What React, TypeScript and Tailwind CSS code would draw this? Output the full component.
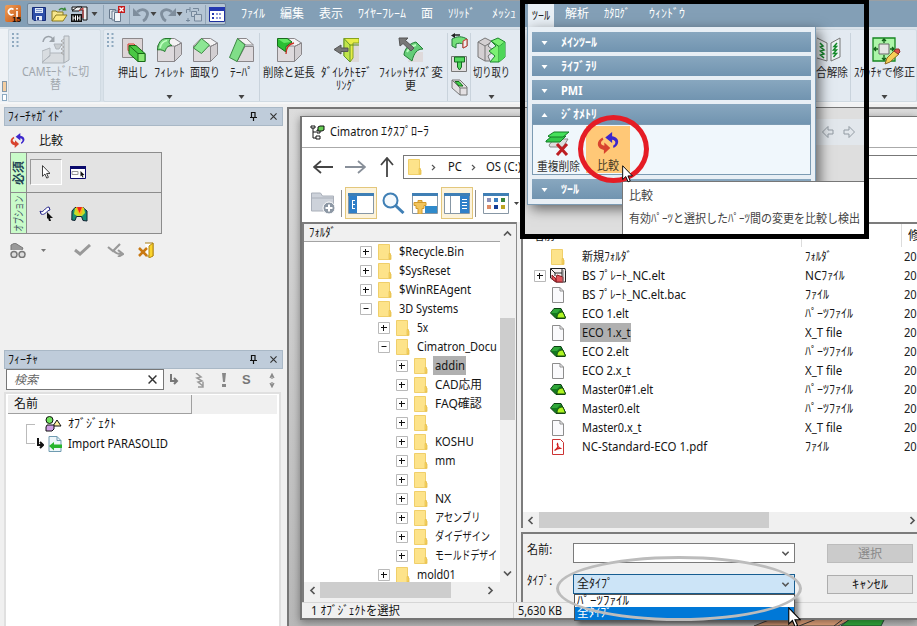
import React, { useLayoutEffect, useRef } from "react";

/* Label squeezed or stretched horizontally to the width of its box */
function Fit({ children, className = "" }: { children: React.ReactNode; className?: string }) {
  const outer = useRef<HTMLSpanElement>(null);
  const inner = useRef<HTMLSpanElement>(null);
  useLayoutEffect(() => {
    if (!outer.current || !inner.current) return;
    const k = outer.current.clientWidth / inner.current.offsetWidth;
    inner.current.style.transform = `scaleX(${k})`;
  }, []);
  return (
    <span ref={outer} className={`block shrink-0 text-left whitespace-nowrap ${className}`}>
      <span ref={inner} className="inline-block origin-left">{children}</span>
    </span>
  );
}

type IconProps = { w: number; h: number; className?: string; children: React.ReactNode };
const Icon = ({ w, h, className = "", children }: IconProps) => (
  <svg width={w} height={h} viewBox={`0 0 ${w} ${h}`} className={`block shrink-0 ${className}`} fill="none">
    {children}
  </svg>
);

const Caret = ({ className = "text-[#444]" }: { className?: string }) => (
  <Icon w={7} h={4} className={className}><path d="M0.5 0h6L3.500 4z" fill="currentColor" /></Icon>
);

/* ---------- quick access icons ---------- */
const AppIcon = () => (
  <Icon w={18} h={18}>
    <defs><linearGradient id="app" x2="1" y2="1"><stop stopColor="#f0a05a" /><stop offset="1" stopColor="#c4500c" /></linearGradient></defs>
    <rect width="16" height="17" rx="2" fill="url(#app)" />
    <path d="M8.500 4.500A3 3 0 1 0 8.500 9" stroke="#fff" strokeWidth="1.600" /><path d="M12 6v6M12 3v1.500" stroke="#fff" strokeWidth="1.600" />
    <text x="7" y="17" fontSize="8" fontWeight="700" fill="#111" fontFamily="Liberation Sans">15</text>
  </Icon>
);
const Save = () => (
  <Icon w={14} h={14}><path d="M.5.5h13v13H2L.5 12z" fill="#2d4fa8" stroke="#162c78" /><path d="M3 1h8v5H3z" fill="#dfe9f8" /><path d="M4 2.500h6M4 4.500h6" stroke="#7f97cc" /><path d="M4 9h6v4.500H4z" fill="#e8eef8" /><path d="M5 10h2v3H5z" fill="#26408f" /></Icon>
);
const Open = () => (
  <Icon w={17} h={15}><path d="M1 14V4h4l1 1h6v3" fill="#f6e58c" stroke="#8a7a20" /><path d="M1 14l4-6h11l-4 6z" fill="#fbe77b" stroke="#8a7a20" /><path d="M8 3c2-2 4-2 5 0" stroke="#3a8a3a" strokeWidth="1.500" /><path d="M11 3.500h4.500L14 0z" fill="#3a8a3a" /></Icon>
);
const Hh = () => (
  <Icon w={17} h={16}><path d="M1 1h15v13h-4V4H1z" fill="#eee" stroke="#111" /><path d="M1 5l5-4h5L8 5z" fill="#eee" stroke="#111" /><path d="M8 5l4-3v10" stroke="#c33" /><path d="M0 8h11v8H0z" fill="#111" /><path d="M2 9.500v5M4.500 9.500v5M2 12h2.500M6.500 9.500v5M9 9.500v5M6.500 12H9" stroke="#fff" /></Icon>
);
const CloseAll = () => (
  <Icon w={17} h={16}><path d="M.5 3.500h6v9h-6z" fill="#dfe5ec" stroke="#66788c" /><path d="M3 5h6v9H3z" fill="#e8edf2" stroke="#66788c" /><path d="M5.500 6.500h6v9h-6z" fill="#f3f6f9" stroke="#66788c" /><path d="M9 0h7v7H9z" fill="#c61a1a" /><path d="M10.500 1.500l4 4m0-4l-4 4" stroke="#fff" strokeWidth="1.400" /></Icon>
);
const Undo = ({ flip = false }: { flip?: boolean }) => (
  <Icon w={17} h={15} className={flip ? "-scale-x-100" : ""}><path d="M4 5c6-5 12-1 10 4-.6 2-2 4-4 5" stroke="#7f8e9d" strokeWidth="2.800" /><path d="M0 1v8h8z" fill="#7f8e9d" /></Icon>
);
const Swap = () => (
  <Icon w={17} h={16}><path d="M5 3.500H1.500V7M5 1v5M1 14.500h4M3 12v4" stroke="#75879a" /><path d="M6.500 5.500h5v5h-5z" fill="#c3ced9" stroke="#75879a" /><path d="M9.500 8.500h7v6.500h-7z" fill="#c3ced9" stroke="#75879a" /><path d="M8 2.500h5.500V5" stroke="#75879a" /></Icon>
);
const ListWin = () => (
  <Icon w={16} h={15}><path d="M.5.500h15v14H.5z" fill="#fff" stroke="#1d2f9c" /><path d="M0 0h16v4H0z" fill="#2438b0" /><path d="M3 6h2v2H3zM3 10h2v2H3z" fill="#2438b0" /><path d="M7 7h6M7 11h6" stroke="#2438b0" strokeDasharray="2 1" /></Icon>
);

/* ---------- ribbon icons ---------- */
const Cube = ({ children }: { children?: React.ReactNode }) => (
  <Icon w={27} h={26}>
    <path d="M1 8.500L9 1h9l8 7.500-7 3H1z" fill="#f4f2f3" />
    <path d="M1.500 9H18.500v15.500h-17z" fill="#dedadd" stroke="#8a878a" />
    <path d="M18.500 9.500L25.500 6v11.500l-7 7z" fill="#d2ced1" stroke="#8a878a" />
    <path d="M1.500 9L9 1.500h9.500l7 4.500-7 3.500" stroke="#8a878a" />
    {children}
  </Icon>
);
const Extrude = () => (
  <Icon w={25} h={26}><path d="M1.500 1.500h20v19h-20z" fill="#ddd5d7" stroke="#8c888a" /><path d="M7 7h6l3 3h-5v5l-4-1.500z" fill="#e9c6c4" stroke="#d63a2a" /><path d="M8 8.500h7l9 8v8h-7l-9-8z" fill="#49c843" stroke="#176b16" /><path d="M17 16.500h7v8h-7zM8 8.500l9 8" fill="#8ae874" stroke="#176b16" /></Icon>
);
const Fillet = () => <Cube><path d="M1.500 13C2 6 5 1.500 10 1.500h5l-1 1c-2 3 0 5 2 6-5 0-6 3-7 6-3-2-6-2-7.500-1.500z" fill="#7ddd84" stroke="#23772c" /><path d="M4 11c1-5 4-7 7-7.500" stroke="#c3ffc3" strokeWidth="1.500" /></Cube>;
const Chamfer = () => <Cube><path d="M1.500 11L9.500 1.500l8 6.500-8 8.500z" fill="#8de794" stroke="#3b8842" /></Cube>;
const Taper = () => (
  <Icon w={27} h={26}><path d="M9 1.500h9.500L25.500 8H18z" fill="#f4f2f3" stroke="#8a878a" /><path d="M17 9.500h8.500v15H9z" fill="#dedadd" stroke="#8a878a" /><path d="M1.500 20.500L9.500 1.500l7.500 6.500-8 16.500z" fill="#80de88" stroke="#3b8842" /></Icon>
);
const DelExtend = () => <Cube><path d="M1.500 1.500h10L16 5l-6 4.500V15L1.500 9z" fill="#2bbf33" stroke="#176b1b" /><path d="M2 2h9l4 3-7 1z" fill="#64e765" /><path d="M18 6c-5 1-8 4-8 11" stroke="#c93224" strokeWidth="1.300" /></Cube>;
const Direct = () => (
  <Icon w={25} h={26}><path d="M16 6h9v19h-9z" fill="#ddd9da" /><path d="M10 1.500h15V6h-6v15l-3 4-6-6z" fill="#e7ed47" stroke="#86a41b" /><path d="M10 1.500l6 6.500v17l-6-6z" fill="#c1e54a" stroke="#5f9430" /><path d="M16 8h9" stroke="#5f8d1b" /><path d="M0 12.500L7 8v3h7v3.500H7V17z" fill="#777" stroke="#555" /></Icon>
);
const FilletSize = () => (
  <Icon w={26} h={26}><path d="M13 15h12v10H10z" fill="#dfdadb" /><path d="M6 18c0-5 5-12 12-13l7 7c-6 0-9 4-11 12z" fill="#65cc78" stroke="#218033" /><path d="M9 15c2-4 5-6 9-7" stroke="#baffbe" strokeWidth="2" /><path d="M1 1h9L7.500 3.500 16 11l-3 3-8-7.500L2 9z" fill="#777" stroke="#555" /></Icon>
);
const Mini1 = () => <Icon w={17} h={16}><path d="M1 6c5-3 10-3 15 0v7l-4 2v-4c-2-1-5-1-7 0v4l-4-2z" fill="#73df79" stroke="#23773a" /><path d="M12 8l4-2v7l-4 2z" fill="#eee" stroke="#c33" /><path d="M3 2h6" stroke="#222" strokeWidth="1.500" /><path d="M0 2.500L4 0v5z" fill="#222" /></Icon>;
const Mini2 = () => <Icon w={17} h={16}><path d="M.5.500h15v15H.5z" fill="#e0dee0" stroke="#777" /><path d="M3.500 1h10v5h-3v5l-2 3-2-3V6h-3z" fill="#55d960" stroke="#126d20" /><path d="M6 6h5" stroke="#126d20" /></Icon>;
const Mini3 = () => <Icon w={17} h={17}><path d="M1 1h8l7 7v8H9L1 9z" fill="#e4e1e3" stroke="#777" /><path d="M9 9h7M9 9v7M1 1l8 8" stroke="#777" /><path d="M4 2.500h4l4 4.500H8z" fill="#45d14a" stroke="#166b1b" /></Icon>;
const Trim = () => (
  <Icon w={29} h={26}><path d="M1 5L8 1l6 3-3 5 6 5-6 5 2 5H8l-7-4z" fill="#d4d0d2" stroke="#777" /><path d="M1 5l7 4v15M8 9l5-3" stroke="#777" /><path d="M14 4l7-3 7 4v15l-6 5h-9l5-6-6-5 7-5z" fill="#7bf073" stroke="#1b852a" /><path d="M14 4l8 5.500V25M22 9.500L28 5" stroke="#1b852a" /><path d="M22 9.500L28 5v15l-6 5z" fill="#4fd659" /></Icon>
);
const CamIcon = () => (
  <Icon w={28} h={29}><path d="M0 16l8-3v8L0 27zM8 18h14v10H0l8-8" fill="#d8dce0" stroke="#b0b6bc" /><path d="M12 9h8l-3 5h-3z" fill="#c9ced2" stroke="#b0b6bc" /><path d="M22 1h5v24l-5 3V2z" fill="#d9dde0" stroke="#aab0b6" /><path d="M22 4l-3 2 3 2-3 2 3 2-3 2 3 2-3 2 3 2" stroke="#aaa" /><path d="M1 7c1-6 7-7 10-3" stroke="#9ba2a9" strokeWidth="1.500" /><path d="M12.500 1v6H7z" fill="#9ba2a9" /></Icon>
);
const Unjoin = () => (
  <Icon w={25} h={26}><path d="M1 1l10 5v18l-10-3M24 1l-9 5v18l9-4z" fill="#eef3f5" stroke="#777" /><path d="M4 6l3 3-2.500 1 3.500 3-3.500 1 3.500 3-3.500 1 3.500 3M21 6l-3 3.500h2.500L17.500 13h3l-3 3.500h3l-3 3.500" stroke="#168b2c" strokeWidth="1.500" /></Icon>
);
const Sketcher = () => (
  <Icon w={29} h={28}><path d="M1 1h22v23H1z" fill="#adf6a9" stroke="#168620" strokeWidth="1.300" /><path d="M7 7h10v10H7z" fill="#e5e5e5" stroke="#666" /><path d="M12 6V2M12 18v5M6 12H2M18 12h4M10 4l2-2 2 2M10 21l2 2 2-2M4 10l-2 2 2 2M20 10l2 2-2 2" stroke="#126018" strokeWidth="1.300" /><path d="M13 27l2-6 8-8 4 4-9 8z" fill="#f7cf56" stroke="#8d6822" /><path d="M22 14l2-2h3l1 3-2 2z" fill="#dc504a" stroke="#8d322a" /></Icon>
);
const Dots = () => (
  <Icon w={7} h={15}>{[0, 4, 8, 12].map((y) => <path key={y} d={`M0 ${y}h2v2H0zM4.500 ${y}h2v2h-2z`} fill="#8fa9bf" />)}</Icon>
);

const Tool = ({ icon, a, aw, b, bw = "", w, arrow = false }: { icon: React.ReactNode; a: string; aw: string; b?: string; bw?: string; w: string; arrow?: boolean }) => (
  <div className={`flex shrink-0 flex-col items-center pt-[7px] ${w}`}>
    <div className="flex h-[29px] shrink-0 items-start">{icon}</div>
    <Fit className={`h-[13px] leading-[13px] ${aw}`}>{a}</Fit>
    {b ? <Fit className={`h-[13px] leading-[13px] ${bw}`}>{b}</Fit> : <div className="h-[13px] shrink-0" />}
    {arrow && <Caret className="mt-[3px] text-[#444]" />}
  </div>
);
const Sep = () => <div className="mt-[3px] h-[68px] w-px shrink-0 bg-[#c9d3dc]" />;

/* ---------- shared glyphs ---------- */
const CompareIcon = ({ s = 24 }: { s?: number }) => (
  <svg width={s} height={s} viewBox="0 0 24 24" className="block shrink-0">
    <path d="M6 6C-1.500 10-.5 18 7.500 19.500V24l7-6.500-6.500-6V15C3.500 14 3 11 7 8.500z" fill="#d8432e" />
    <path d="M18 17.500c7.500-4 6.500-12-1.500-13V0L9 6l7.500 6V8.500c4 .5 5 4 1 6.500z" fill="#3d27cc" />
  </svg>
);
const Arrow = ({ size = 19 }: { size?: number }) => (
  <svg width={(size * 12) / 19} height={size} viewBox="0 0 12 19" className="block"><path d="M.7.8v14.500L4 12.200l2.400 5.600 2.300-1-2.400-5.300H11z" fill="#fff" stroke="#000" /></svg>
);
const Pin = () => <Icon w={7} h={9}><path d="M1.500 0v5M5 0v5M1.500.5H5M0 5.500h7M3.500 6v3" stroke="#111" strokeWidth="1.200" /></Icon>;
const X = ({ s = 7 }: { s?: number }) => <svg width={s} height={s} viewBox="0 0 8 8"><path d="M.5.500l7 7m0-7l-7 7" stroke="#333" strokeWidth="1.300" /></svg>;
const Folder = () => <Icon w={14} h={16}><path d="M.5.5h11v9.500l1.500 1V15.500H.5z" fill="#fde38a" stroke="#f0cf6a" /><path d="M11 9.500h1.500V15H11z" fill="#f9d660" stroke="#e2bb48" strokeWidth=".6" /></Icon>;
const Expand = ({ open = false }: { open?: boolean }) => (
  <Icon w={12} h={12}><path d="M.5.500h11v11H.5z" fill="#fff" stroke="#b9b9b9" /><path d={open ? "M3.500 5.500h5" : "M3 5.500h6M5.500 3v6"} stroke="#111" strokeWidth="1" /></Icon>
);
const Doc = () => <Icon w={12} h={16}><path d="M.5.500h7.500l3.500 3.500v11.500H.5z" fill="#fafafc" stroke="#8d8d8d" /><path d="M8 .5V4h3.500" stroke="#8d8d8d" /></Icon>;
const Part = () => <Icon w={16} h={11}><path d="M.5 5L4 .5h7l4.500 9L15 10.500H6z" fill="#137a1f" stroke="#0b4112" /><path d="M4 1h7l-4 4H1z" fill="#30a73a" /><path d="M7 10c0-4 2-6 6-6l2.500 6z" fill="#aef522" stroke="#164c11" /></Icon>;
const NcPart = () => <Icon w={17} h={15}><path d="M.5.500H15l.5 2V14H6L.5 10z" fill="#f7f2f2" stroke="#222" /><path d="M1 1l4 4h7V1M5 5v3M12 5v4" stroke="#222" /><path d="M2 7l4 4v3l-4-3zM7 7l6 2v5H6v-4z" fill="#e0545a" stroke="#8b1d22" /><path d="M13 2v12" stroke="#777" /></Icon>;
const Pdf = () => <Icon w={12} h={16}><path d="M.5.500h8l3 3v12H.5z" fill="#fff" stroke="#c33" /><path d="M2.500 11.500c3-2 4-5 3-7-1 1 1 5 4 5-2-.5-5 .5-7 2z" stroke="#d22020" strokeWidth="1.200" /></Icon>;
const Chevron = ({ d, className = "" }: { d: string; className?: string }) => <Icon w={9} h={9} className={className}><path d={d} stroke="#555" strokeWidth="1.700" /></Icon>;
const LEFT = "M6.500 1L3 4.500 6.500 8";
const RIGHT = "M2.500 1L6 4.500 2.500 8";
const UP = "M1 6.500L4.500 3 8 6.500";
const DOWN = "M1 2.500L4.500 6 8 2.500";

/* ---------- main frame ---------- */
const MenuBar = () => (
  <div className="flex h-[27px] shrink-0 items-center border-t border-[#9a9fa3] bg-[#839fb6] text-[12px] text-white">
    <div className="flex w-[27px] justify-center"><AppIcon /></div>
    <div className="flex h-[22px] w-[199px] shrink-0 items-center rounded-[2px] border border-[#71869a] bg-[#b5c5d4] pl-1">
      <Save /><span className="w-[6px]" /><Open /><span className="w-[4px]" /><Hh /><span className="w-[4px]" /><Caret />
      <span className="mr-[5px] ml-[5px] h-[19px] w-px bg-[#91a5b7]" /><CloseAll />
      <span className="mx-[3px] h-[19px] w-px bg-[#91a5b7]" /><Undo /><Caret /><span className="w-[3px]" /><Undo flip /><Caret /><span className="w-[3px]" /><Swap />
      <span className="mx-[3px] h-[19px] w-px bg-[#91a5b7]" /><ListWin />
    </div>
    <Fit className="ml-[15px] w-[24px]">ﾌｧｲﾙ</Fit>
    <Fit className="ml-[15px] w-[24px]">編集</Fit>
    <Fit className="ml-[15px] w-[24px]">表示</Fit>
    <Fit className="ml-[15px] w-[48px]">ﾜｲﾔｰﾌﾚｰﾑ</Fit>
    <Fit className="ml-[15px] w-[12px]">面</Fit>
    <Fit className="ml-[15px] w-[27px]">ｿﾘｯﾄﾞ</Fit>
    <Fit className="ml-[17px] w-[24px]">ﾒｯｼｭ</Fit>
    <div className="ml-[12px] flex h-[23px] w-[26px] items-center self-end bg-[#e8eff5] pl-[4px] text-[#222]"><Fit className="w-[18px]">ﾂｰﾙ</Fit></div>
    <Fit className="ml-[11px] w-[24px]">解析</Fit>
    <Fit className="ml-[15px] w-[26px]">ｶﾀﾛｸﾞ</Fit>
    <Fit className="ml-[19px] w-[36px]">ｳｨﾝﾄﾞｳ</Fit>
  </div>
);

const Ribbon = () => (
  <div className="flex h-[77px] shrink-0 border-b-2 border-[#f5f6f7] bg-[#d9e2ea] pt-[2px] text-[12px] text-[#262626]">
    <div className="flex w-[8px] shrink-0 flex-col justify-end gap-[2px] bg-[#edf1f5] pb-[1px] pl-[2px]">
      <div className="h-[11px] w-[5px] shrink-0 border border-[#8498a8] bg-[#f3cda0]" /><div className="h-[7px] w-[5px] shrink-0 border border-[#8ba9c1] bg-white" />
    </div>
    <div className="mr-[2px] flex w-[93px] shrink-0 rounded-[2px] border border-[#d0dae2] bg-[#e3eaf1] text-[#a0a6ac]">
      <div className="pt-[3px] pl-[3px]"><Dots /></div>
      <div className="flex flex-col items-center pt-[5px] pl-[3px]">
        <CamIcon /><Fit className="mt-[1px] h-[13px] w-[67px] leading-[13px]">CAMﾓｰﾄﾞに切</Fit><Fit className="h-[13px] w-[11px] leading-[13px]">替</Fit>
      </div>
    </div>
    <div className="flex min-w-0 flex-1 rounded-[2px] border border-[#d0dae2] bg-[#e3eaf1]">
      <div className="w-[11px] shrink-0 pt-[3px] pl-[3px]"><Dots /></div>
      <Tool w="w-[36px]" icon={<Extrude />} a="押出し" aw="w-[30px]" />
      <Tool w="w-[36px]" icon={<Fillet />} a="ﾌｨﾚｯﾄ" aw="w-[31px]" arrow />
      <Tool w="w-[36px]" icon={<Chamfer />} a="面取り" aw="w-[30px]" />
      <Tool w="w-[36px]" icon={<Taper />} a="ﾃｰﾊﾟ" aw="w-[23px]" arrow />
      <Sep />
      <Tool w="w-[58px]" icon={<DelExtend />} a="削除と延長" aw="w-[52px]" />
      <Tool w="w-[56px]" icon={<Direct />} a="ﾀﾞｲﾚｸﾄﾓﾃﾞ" aw="w-[51px]" b="ﾘﾝｸﾞ" bw="w-[21px]" />
      <Tool w="w-[73px]" icon={<FilletSize />} a="ﾌｨﾚｯﾄｻｲｽﾞ変" aw="w-[64px]" b="更" bw="w-[11px]" />
      <Sep />
      <div className="flex w-[22px] shrink-0 flex-col items-center gap-[7px] pt-[3px]"><Mini1 /><Mini2 /><Mini3 /></div>
      <Sep />
      <Tool w="w-[41px]" icon={<Trim />} a="切り取り" aw="w-[37px]" arrow />
      <div className="w-[302px] shrink-0" />
      <Tool w="w-[36px]" icon={<div className="-ml-[8px]"><Unjoin /></div>} a="合解除" aw="w-[32px]" />
      <Sep />
      <Tool w="w-[67px]" icon={<div className="ml-[4px]"><Sketcher /></div>} a="ｽｹｯﾁｬで修正" aw="w-[61px]" arrow />
    </div>
  </div>
);

const PaneHeader = ({ text, w }: { text: string; w: string }) => (
  <div className="flex h-[19px] shrink-0 items-center border border-[#a9b8c6] bg-[#bfccda] pl-[3px] text-[12px] text-[#111]">
    <Fit className={w}>{text}</Fit><div className="flex-1" /><Pin /><span className="w-[13px]" /><X /><span className="w-[5px]" />
  </div>
);

const FeatureGuide = () => (
  <div className="h-[243px] shrink-0">
    <PaneHeader text="ﾌｨｰﾁｬｶﾞｲﾄﾞ" w="w-[57px]" />
    <div className="flex h-[26px] items-center pt-[3px] pl-[6px] text-[12px] text-[#111]"><CompareIcon s={15} /><Fit className="ml-[14px] w-[24px]">比較</Fit></div>
    <div className="ml-[6px] h-[82px] w-[152px] border border-[#8c8c8c] bg-[#e3e3e3]">
      <div className="flex h-[40px] border-b border-[#8c8c8c]">
        <div className="flex w-[16px] shrink-0 items-center justify-center border-r border-[#8c8c8c] bg-[#c9fbc9]"><span className="-rotate-90 text-[12px] leading-none font-bold whitespace-nowrap text-[#245]">必須</span></div>
        <div className="mt-[6px] ml-[3px] flex h-[26px] w-[32px] items-center justify-center border border-t-[#999] border-r-white border-b-white border-l-[#999] bg-[#e9e9e9]"><Arrow size={14} /></div>
        <Icon w={16} h={13} className="mt-[13px] ml-[8px]"><path d="M.5.500h15v12H.5z" fill="#fff" stroke="#09096b" /><path d="M0 0h16v3H0z" fill="#09096b" /><path d="M2 5.500h6v3H2z" stroke="#999" /><path d="M10.500 5l4 4-2 .2 1 2-1 .3-1-2-1 1z" fill="#111" /></Icon>
      </div>
      <div className="flex h-[40px]">
        <div className="flex w-[16px] shrink-0 items-center justify-center border-r border-[#8c8c8c] bg-[#c9fbc9]"><span className="-rotate-90 scale-x-65 text-[11px] leading-none whitespace-nowrap text-[#456]">オプション</span></div>
        <Icon w={15} h={15} className="mt-[13px] ml-[12px]"><path d="M1 5c3 3 5-4 9-4l1 3C8 4 6 10 2 8z" fill="#fff" stroke="#22228a" /><path d="M8 6l6 6H11l1 3h-2l-1-3-1 1z" fill="#111" /></Icon>
        <Icon w={17} h={16} className="mt-[13px] ml-[17px]"><path d="M1 5l3-3.500h8l4 3.500v10l-4-.500-1.500-4h-5L4 14.500.8 14z" fill="#178f74" stroke="#123" /><path d="M4 2h9l1 5-3 3H6L3 8z" fill="#c6de28" /><path d="M5 1h7l-1 6-2 2-2-2z" fill="#ffb01c" /><path d="M6 1h5L8.500 7z" fill="#e22" /></Icon>
      </div>
    </div>
    <div className="flex h-[32px] items-center pl-[6px]">
      <Icon w={16} h={15}><path d="M1 7V2l4-2 8 5-1 2" fill="#999" stroke="#777" /><circle cx="4" cy="11.500" r="3" stroke="#777" fill="#ddd" strokeWidth="1.500" /><circle cx="12" cy="11.500" r="3" stroke="#777" fill="#ddd" strokeWidth="1.500" /></Icon>
      <Icon w={5} h={3} className="ml-[15px]"><path d="M0 0h5L2.500 3z" fill="#777" /></Icon>
      <Icon w={17} h={12} className="ml-[28px]"><path d="M1 6l5 4 10-9" stroke="#999" strokeWidth="3" /></Icon>
      <Icon w={17} h={14} className="ml-[16px]"><path d="M1 4l5 4 7-7M7 8c2 3 4 3 7 3M11 7l5 4-5 3" stroke="#999" strokeWidth="2.200" /></Icon>
      <Icon w={17} h={16} className="ml-[14px]"><path d="M7 1h8v13H9" fill="#fff" stroke="#a87d12" /><path d="M11 4l4-3v13l-4 2z" fill="#fbd42d" stroke="#b58910" /><path d="M1 6l8 8M9 6l-8 8" stroke="#c97912" strokeWidth="2.500" /></Icon>
    </div>
  </div>
);

const FeatureTree = () => (
  <div className="flex flex-1 flex-col">
    <PaneHeader text="ﾌｨｰﾁｬ" w="w-[30px]" />
    <div className="flex h-[23px] shrink-0 items-start pl-[2px] text-[#888]">
      <div className="flex h-[21px] w-[158px] items-center border border-[#777] bg-white pr-[6px] pl-[7px]"><Fit className="w-[24px] text-[12px] leading-none text-[#666] italic">検索</Fit><div className="flex-1" /><X s={9} /></div>
      <Icon w={10} h={11} className="mt-[5px] ml-[5px]"><path d="M2 0v7h6M5 4l3 3-3 3" stroke="#777" strokeWidth="2" /></Icon>
      <Icon w={10} h={15} className="mt-[4px] ml-[16px]"><path d="M1 0l5 4-4 1 5 3-4 1 5 4M8 9v5H3" stroke="#999" strokeWidth="1.500" /></Icon>
      <Icon w={4} h={14} className="mt-[4px] ml-[17px]"><path d="M0 0h4L3 9H1zM0 11h4v3H0z" fill="#888" /></Icon>
      <span className="ml-[16px] font-['Liberation_Sans',sans-serif] text-[13px] leading-[21px] font-bold text-[#777]">S</span>
      <Icon w={6} h={15} className="mt-[4px] ml-[18px]"><path d="M1 5l2-4 2 4M3 1v5M1 10l2 4 2-4M3 9v5" stroke="#888" strokeWidth="1.200" /></Icon>
    </div>
    <div className="mr-[2px] flex-1 border-2 border-b-0 border-[#e0e0e0] bg-white px-[2px] pt-[1px] text-[12px] text-[#111]">
      <div className="flex h-[19px] bg-[#f0f0f0]"><div className="flex w-[184px] items-center border-r border-b border-[#a0a0a0] pl-[6px]"><Fit className="w-[24px]">名前</Fit></div></div>
      <div className="flex h-[20px] items-center pl-[18px]"><div className="h-[10px] w-[9px] self-end border-t border-l border-[#bbb]" />
        <Icon w={17} h={16} className="ml-[10px]"><circle cx="4.500" cy="4" r="3.500" fill="#71e35d" stroke="#111" /><path d="M12 4l4 6H8z" fill="#fff0a2" stroke="#111" /><path d="M2 9h7v4l-2 2H1v-4z" fill="#cf9ee5" stroke="#111" /></Icon>
        <Fit className="ml-[6px] w-[48px]">ｵﾌﾞｼﾞｪｸﾄ</Fit></div>
      <div className="flex h-[19px] items-center pl-[18px]"><div className="h-[10px] w-[9px] self-start border-b border-l border-[#bbb]" />
        <Icon w={8} h={11} className="ml-[1px]"><path d="M2 0v7h5M4 4l3 3-3 3" stroke="#111" strokeWidth="2" /></Icon>
        <Icon w={15} h={16} className="ml-[4px]"><path d="M1 .5h8l4 4v11H1z" fill="#eef6fa" stroke="#6f9bb1" /><path d="M9 .5v4h4" stroke="#6f9bb1" /><path d="M1 10l5-4v2.500h8v3.500H6v2.500z" fill="#28b52e" /></Icon>
        <Fit className="ml-[5px] w-[100px]">Import PARASOLID</Fit></div>
    </div>
  </div>
);

/* ---------- explorer dialog ---------- */
const folders: { pad: string; name: string; w: string; open?: boolean; sel?: boolean }[] = [
  { pad: "pl-[57px]", name: "$Recycle.Bin", w: "w-[65px]" },
  { pad: "pl-[57px]", name: "$SysReset", w: "w-[51px]" },
  { pad: "pl-[57px]", name: "$WinREAgent", w: "w-[72px]" },
  { pad: "pl-[57px]", name: "3D Systems", w: "w-[59px]", open: true },
  { pad: "pl-[75px]", name: "5x", w: "w-[11px]" },
  { pad: "pl-[75px]", name: "Cimatron_Docu", w: "w-[80px]", open: true },
  { pad: "pl-[93px]", name: "addin", w: "w-[30px]", sel: true },
  { pad: "pl-[93px]", name: "CAD応用", w: "w-[47px]" },
  { pad: "pl-[93px]", name: "FAQ確認", w: "w-[47px]" },
  { pad: "pl-[93px]", name: "", w: "" },
  { pad: "pl-[93px]", name: "KOSHU", w: "w-[39px]" },
  { pad: "pl-[93px]", name: "mm", w: "w-[20px]" },
  { pad: "pl-[93px]", name: "", w: "" },
  { pad: "pl-[93px]", name: "NX", w: "w-[16px]" },
  { pad: "pl-[93px]", name: "アセンブリ", w: "w-[45px]" },
  { pad: "pl-[93px]", name: "ダイデザイン", w: "w-[55px]" },
  { pad: "pl-[93px]", name: "モールドデザイ", w: "w-[62px]" },
  { pad: "pl-[75px]", name: "mold01", w: "w-[39px]" },
];

const files: { icon: React.ReactNode; name: string; w: string; type: string; tw: string; sel?: boolean; plus?: boolean }[] = [
  { icon: <Folder />, name: "新規ﾌｫﾙﾀﾞ", w: "w-[50px]", type: "ﾌｫﾙﾀﾞ", tw: "w-[27px]" },
  { icon: <NcPart />, name: "BS ﾌﾟﾚｰﾄ_NC.elt", w: "w-[83px]", type: "NCﾌｧｲﾙ", tw: "w-[40px]", plus: true },
  { icon: <Doc />, name: "BS ﾌﾟﾚｰﾄ_NC.elt.bac", w: "w-[104px]", type: "ﾌｧｲﾙ", tw: "w-[24px]" },
  { icon: <Part />, name: "ECO 1.elt", w: "w-[47px]", type: "ﾊﾟｰﾂﾌｧｲﾙ", tw: "w-[48px]" },
  { icon: <Doc />, name: "ECO 1.x_t", w: "w-[49px]", type: "X_T file", tw: "w-[37px]", sel: true },
  { icon: <Part />, name: "ECO 2.elt", w: "w-[47px]", type: "ﾊﾟｰﾂﾌｧｲﾙ", tw: "w-[48px]" },
  { icon: <Doc />, name: "ECO 2.x_t", w: "w-[49px]", type: "X_T file", tw: "w-[37px]" },
  { icon: <Part />, name: "Master0#1.elt", w: "w-[71px]", type: "ﾊﾟｰﾂﾌｧｲﾙ", tw: "w-[48px]" },
  { icon: <Part />, name: "Master0.elt", w: "w-[58px]", type: "ﾊﾟｰﾂﾌｧｲﾙ", tw: "w-[48px]" },
  { icon: <Doc />, name: "Master0.x_t", w: "w-[60px]", type: "X_T file", tw: "w-[37px]" },
  { icon: <Pdf />, name: "NC-Standard-ECO 1.pdf", w: "w-[125px]", type: "ﾌｧｲﾙ", tw: "w-[24px]" },
];

const Win = ({ children }: { children: React.ReactNode }) => (
  <Icon w={26} h={21}><path d="M.5.500h25v20H.5z" fill="#fff" stroke="#8797a5" /><path d="M0 0h26v3H0z" fill="#3f7fb5" />{children}</Icon>
);
const swatches = ["#8f91b8", "#3b7fc0", "#3a853d", "#df8b66", "#143d96", "#bda41f"];

const DialogToolbar = () => (
  <div className="flex h-[38px] shrink-0 items-center pl-[9px]">
    <Icon w={25} h={22}><path d="M.5 1h9l2 3h11v15H.5z" fill="#cdd2da" stroke="#aab0ba" /><path d="M.5 6h22" stroke="#aab0ba" /><circle cx="18" cy="16" r="6" fill="#8d98a5" stroke="#fff" /><path d="M14.500 16h7M18 12.500v7" stroke="#fff" strokeWidth="2" /></Icon>
    <div className="mr-[3px] ml-[5px] h-[27px] w-px bg-[#8e8e8e]" />
    <div className="flex h-[32px] w-[32px] items-center justify-center border border-[#e3c77c] bg-[#fcf3dc]"><Win><path d="M1 3h8v17H1z" fill="#2f7fc8" /><path d="M4.500 7v9M4 7.500h3M4 11.500h3M4 15.500h3" stroke="#fff" /></Win></div>
    <Icon w={23} h={22} className="ml-[5px]"><circle cx="8.500" cy="8.500" r="7" stroke="#3f7fb5" strokeWidth="2" fill="#f4f9fd" /><path d="M13.500 13.500l8 7.500" stroke="#3f7fb5" strokeWidth="3" /></Icon>
    <span className="w-[7px]" />
    <Win><path d="M13 13h12v7H13z" fill="#2f8acb" /><path d="M2 9.500h12v3h-2v3h-2V21H6v-5.500H4v-3H2zM6 7.500h4v2H6z" fill="#f1c45c" stroke="#d19a2c" /></Win>
    <div className="ml-[3px] flex h-[32px] w-[32px] items-center justify-center border border-[#e3c77c] bg-[#fcf3dc]"><Win><path d="M6.500 3v17" stroke="#8797a5" /><path d="M16 3h9v17h-9z" fill="#2f7fc8" /><path d="M18 6.500h5M18 9.500h5M18 12.500h5M18 15.500h5" stroke="#fff" /></Win></div>
    <div className="mr-[7px] ml-[2px] h-[27px] w-px bg-[#8e8e8e]" />
    <Win>{swatches.map((c, i) => <rect key={c} x={4 + (i % 3) * 7} y={5 + Math.floor(i / 3) * 7} width="4" height="4" fill={c} />)}</Win>
    <Icon w={5} h={3} className="ml-[5px]"><path d="M0 0h5L2.500 3z" fill="#444" /></Icon>
  </div>
);

const FolderPane = () => (
  <div className="flex w-[214px] shrink-0 flex-col border-t-2 border-l-2 border-[#7c7c7c] bg-[#f0f0f0]">
    <div className="flex h-[358px] shrink-0">
      <div className="w-[196px] shrink-0 overflow-hidden bg-white">
        <div className="flex h-[18px] items-center border-b border-[#a3a3a3] bg-[#f0f0f0] pl-[5px]"><Fit className="w-[27px]">ﾌｫﾙﾀﾞ</Fit></div>
        {folders.map((f, i) => (
          <div key={i} className={`-ml-px flex h-[19px] items-center ${f.pad}`}>
            <Expand open={f.open} /><span className="w-[6px] shrink-0" /><Folder />
            {f.name && <div className={`ml-[5px] flex h-[19px] items-center pr-px pl-[2px] ${f.sel ? "bg-[#b0b0b0]" : ""}`}><Fit className={f.w}>{f.name}</Fit></div>}
          </div>
        ))}
      </div>
      <div className="flex w-[15px] flex-col items-center"><Chevron d={UP} className="mt-[5px]" /><div className="mt-[80px] h-[102px] w-full shrink-0 bg-[#cdcdcd]" /><div className="flex-1" /><Chevron d={DOWN} className="mb-[4px]" /></div>
    </div>
    <div className="flex h-[16px] shrink-0 items-center pl-[4px]"><Chevron d={LEFT} /><div className="ml-[3px] h-full w-[131px] bg-[#cdcdcd]" /><Chevron d={RIGHT} className="ml-[35px]" /></div>
  </div>
);

const FilePane = () => (
  <div className="flex h-[306px] flex-col border-t-2 border-l-2 border-[#7c7c7c] bg-white">
    <div className="flex h-[23px] shrink-0 items-center"><Fit className="ml-[10px] w-[22px]">名前</Fit><div className="ml-[246px] h-full w-px bg-[#dcdcdc]" /><div className="ml-[99px] h-full w-px bg-[#dcdcdc]" /><span className="ml-[6px] w-[9px] shrink-0 overflow-hidden whitespace-nowrap">修正</span></div>
    <div className="flex-1">
      {files.map((f, i) => (
        <div key={i} className="flex h-[19px] items-center overflow-hidden">
          <div className="w-[23px] shrink-0 pl-[11px]">{f.plus && <Expand />}</div>
          <div className="flex w-[24px] shrink-0 justify-center">{f.icon}</div>
          <div className="w-[235px] shrink-0 pl-[10px]"><div className={`flex h-[19px] w-fit items-center pl-[2px] ${f.sel ? "bg-[#b0b0b0]" : ""}`}><Fit className={f.w}>{f.name}</Fit></div></div>
          <Fit className={f.tw}>{f.type}</Fit><div className="flex-1" /><Fit className="w-[13px] text-[#222]">20</Fit>
        </div>
      ))}
    </div>
    <div className="flex h-[16px] shrink-0 items-center bg-[#f0f0f0] pl-[3px]"><Chevron d={LEFT} /><div className="ml-[4px] h-full w-[230px] bg-[#cdcdcd]" /><div className="flex-1" /><Chevron d={RIGHT} /></div>
  </div>
);

const Explorer = () => (
  <div className="absolute top-[116px] left-[300px] flex h-[504px] w-[617px] flex-col border-t border-b-2 border-l-2 border-[#747474] bg-white text-[12px] text-[#151515] shadow-[0_2px_8px_rgba(0,0,0,0.4)]">
    <div className="flex h-[31px] shrink-0 items-center border-b border-[#aaa] pl-[8px]">
      <Icon w={15} h={15}><path d="M1 1h4v2H1zM3 3v10h3M3 7h3" stroke="#111" /><path d="M7 5h3v3H7zM6 11h4v3H6z" fill="#fff" stroke="#111" /><path d="M8 2l2-1h4v4l-2 1H8z" fill="#67cf54" stroke="#111" /></Icon>
      <Fit className="ml-[5px] w-[48px]">Cimatron</Fit><Fit className="ml-[3px] w-[48px]">ｴｸｽﾌﾟﾛｰﾗ</Fit>
    </div>
    <div className="flex h-[36px] shrink-0 items-center pt-[2px] pl-[11px]">
      <Icon w={21} h={14}><path d="M20 7H1M8 1L1 7l7 6" stroke="#444" strokeWidth="1.800" /></Icon>
      <Icon w={21} h={14} className="ml-[11px]"><path d="M0 7h20M13 1l7 6-7 6" stroke="#888f99" strokeWidth="1.800" /></Icon>
      <Icon w={14} h={20} className="ml-[14px]"><path d="M7 20V1M1 8l6-7 6 7" stroke="#444" strokeWidth="1.800" /></Icon>
      <div className="ml-[9px] flex h-[24px] flex-1 items-center border border-r-0 border-[#777] pl-[4px]">
        <Folder /><Chevron d={RIGHT} className="ml-[7px] scale-75" /><Fit className="ml-[10px] w-[14px]">PC</Fit><Chevron d={RIGHT} className="ml-[7px] scale-75" /><Fit className="ml-[8px] w-[35px]">OS (C:)</Fit>
      </div>
    </div>
    <DialogToolbar />
    <div className="flex h-[380px] shrink-0 bg-[#f0f0f0]">
      <FolderPane />
      <div className="mr-[4px] w-px shrink-0 bg-[#8b8b8b]" />
      <div className="min-w-0 flex-1">
        <FilePane />
        <div className="mt-[4px] flex h-[70px] flex-col gap-[9px] border-t-2 border-l-2 border-[#7c7c7c] pt-[9px] pl-[4px]">
          <div className="flex h-[22px] shrink-0 items-start"><Fit className="w-[25px] leading-[14px]">名前:</Fit><div className="ml-[21px] flex h-[20px] w-[222px] items-center justify-end border border-[#7b7b7b] bg-white pr-[4px]"><Chevron d={DOWN} className="scale-90" /></div><div className="mt-[1px] ml-[32px] flex h-[19px] w-[86px] items-center justify-center border border-[#bcbcbc] bg-[#cbcbcb] text-[#898989]">選択</div></div>
          <div className="flex h-[22px] shrink-0 items-start"><Fit className="w-[25px] leading-[14px]">ﾀｲﾌﾟ:</Fit><div className="ml-[21px] flex h-[20px] w-[222px] items-center border border-[#175d91] bg-[#cce4f7] pr-[4px] pl-[3px]"><Fit className="w-[36px]">全ﾀｲﾌﾟ</Fit><div className="flex-1" /><Chevron d={DOWN} className="scale-90" /></div><div className="mt-[1px] ml-[32px] flex h-[19px] w-[86px] items-center justify-center border border-[#adadad] bg-[#e1e1e1]"><Fit className="w-[36px]">ｷｬﾝｾﾙ</Fit></div></div>
        </div>
      </div>
    </div>
    <div className="flex h-[16px] shrink-0 items-center border-t border-[#d6d6d6] bg-[#f0f0f0] pl-[9px]"><Fit className="w-[89px]">1 ｵﾌﾞｼﾞｪｸﾄを選択</Fit><div className="ml-[113px] h-full w-px bg-[#d0d0d0]" /><Fit className="ml-[4px] w-[44px]">5,630 KB</Fit></div>
  </div>
);

/* ---------- tools drop-down with its highlight frame ---------- */
const Bar = ({ text, w, up = false }: { text: string; w: string; up?: boolean }) => (
  <div className="flex h-[20px] items-center bg-linear-to-b from-[#88a7bf] to-[#7194b0] pt-[1px] pl-[9px] font-bold text-white">
    <Caret className={up ? "rotate-180 text-white" : "text-white"} /><Fit className={`ml-[13px] ${w}`}>{text}</Fit>
  </div>
);

const ToolsMenu = () => (
  <div className="absolute top-0 left-[520px] h-[239px] w-[349px] overflow-hidden border-[5px] border-t-4 border-black">
    <div className="h-[99px]" />
    <div className="h-[131px] bg-[#dedede]">
      <div className="h-[5px] border-b border-[#777] bg-[#f2f3f4]" />
      <div className="mt-[11px] ml-[286px] flex h-[26px] w-[60px] items-center gap-[9px] bg-[#e2e7ec] pl-[11px] text-[#929ba3]">
        <Icon w={12} h={12}><path d="M6 .5L.5 6 6 11.500V8h5V4H6z" stroke="currentColor" /></Icon><Icon w={12} h={12}><path d="M6 .5L11.500 6 6 11.500V8H1V4h5z" stroke="currentColor" /></Icon>
      </div>
    </div>
    <div className="absolute top-[23px] left-[2px] flex h-[178px] w-[289px] flex-col gap-[4px] border-x border-b border-[#7c9bb3] bg-[#e8eff5] px-[4px] pt-[5px] text-[12px] shadow-[4px_4px_12px_rgba(0,0,0,0.55)]">
      <Bar text="ﾒｲﾝﾂｰﾙ" w="w-[36px]" /><Bar text="ﾗｲﾌﾞﾗﾘ" w="w-[36px]" /><Bar text="PMI" w="w-[21px]" />
      <div>
        <Bar text="ｼﾞｵﾒﾄﾘ" w="w-[36px]" up />
        <div className="flex h-[51px] border border-[#7c9bb3] bg-[#f0f7fc] pt-[1px] pl-[3px]">
          <div className="flex w-[44px] flex-col items-center pt-[5px]">
            <Icon w={26} h={25}><path d="M4 14l5-6h14l-5 8H5z" fill="#ddd" stroke="#888" /><path d="M1 10l6-5h14l-6 6H1z" fill="#32c94a" stroke="#147d27" /><path d="M3 5l6-4h15l-6 5H4z" fill="#45e15b" stroke="#147d27" /><path d="M12 13l10 11M22 13L12 24" stroke="#bd1e22" strokeWidth="3" /></Icon>
            <Fit className="mt-[4px] w-[43px] leading-[14px] text-[#333]">重複削除</Fit>
          </div>
          <div className="ml-[6px] flex h-[47px] w-[44px] flex-col items-center bg-[#ffc877] pt-[6px]"><CompareIcon s={22} /><Fit className="mt-[5px] w-[22px] leading-[14px] text-[#443923]">比較</Fit></div>
        </div>
      </div>
      <Bar text="ﾂｰﾙ" w="w-[18px]" />
    </div>
    <div className="absolute top-[177px] left-[97px] h-[58px] w-[243px] border-t border-l border-[#777] bg-white pt-[6px] pl-[6px] text-[12px] leading-[16px] text-[#444]"><Fit className="w-[24px]">比較</Fit><Fit className="mt-[7px] w-[231px]">有効ﾊﾟｰﾂと選択したﾊﾟｰﾂ間の変更を比較し検出</Fit></div>
    <div className="absolute top-[111px] left-[53px] h-[68px] w-[71px] rounded-[50%] border-[5px] border-[#e51c25]" />
    <div className="absolute top-[161px] left-[97px]"><Arrow size={18} /></div>
  </div>
);

export default function App() {
  return (
    <div className="relative h-[626px] w-[917px] overflow-hidden bg-[#f0f0f0] font-['Noto_Sans','Noto_Sans_CJK_JP',sans-serif]">
      <div className="flex h-full flex-col">
        <MenuBar />
        <Ribbon />
        <div className="flex min-h-0 flex-1 pt-[3px] pl-[4px]">
          <div className="flex w-[279px] shrink-0 flex-col"><FeatureGuide /><FeatureTree /></div>
          <div className="ml-[4px] flex flex-1 flex-col justify-end border-t-2 border-l-2 border-[#777] bg-linear-to-b from-[#dcdcdc] to-[#b8b8b8]">
            <Icon w={628} h={8}><path d="M465 8l20-8h80l-16 8z" fill="#e1a27b" stroke="#444" /><path d="M510 8l20-8M545 8l8-6" stroke="#333" /><path d="M552 8l10-8h34l-4 8z" fill="#32a83c" stroke="#243" /></Icon>
          </div>
        </div>
      </div>
      <Explorer />
      <div className="absolute top-[594px] left-[574px] w-[221px] border border-[#555] bg-white text-[12px] leading-[12px] text-[#111] shadow-[4px_3px_4px_rgba(0,0,0,0.4)]">
        <div className="h-[12px] pl-[2px]"><Fit className="w-[52px]">ﾊﾟｰﾂﾌｧｲﾙ</Fit></div>
        <div className="h-[13px] overflow-hidden bg-[#0078d7] pl-[2px] text-white"><Fit className="w-[35px]">全ﾀｲﾌﾟ</Fit></div>
      </div>
      <div className="absolute top-[556px] left-[556px] h-[65px] w-[246px] rounded-[50%] border-[3px] border-[#bcbcbc]" />
      <div className="absolute top-[607px] left-[788px]"><Arrow size={21} /></div>
      <ToolsMenu />
    </div>
  );
}
